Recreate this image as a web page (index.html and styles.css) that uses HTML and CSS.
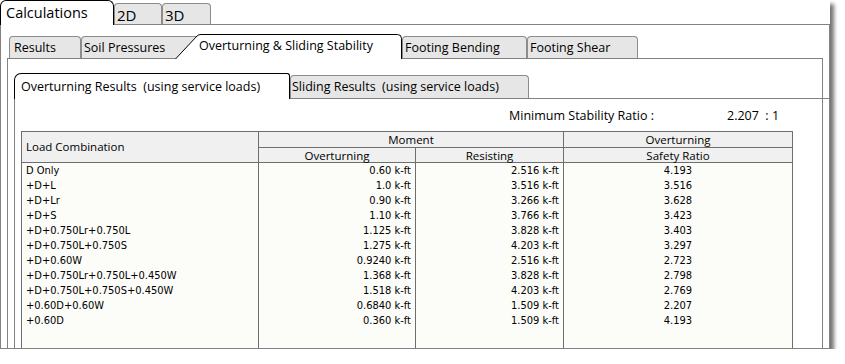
FILE: index.html
```html
<!DOCTYPE html>
<html>
<head>
<meta charset="utf-8">
<link rel="stylesheet" href="styles.css">
</head>
<body>
<div class="window">
  <div class="tabs top-tabs">
    <div class="tab top active calc">Calculations</div>
    <div class="tab top t2d">2D</div>
    <div class="tab top t3d">3D</div>
  </div>
  <div class="pane outer">
    <div class="tabs mid-tabs">
      <div class="tab mid results">Results</div>
      <div class="tab mid soil">Soil Pressures</div>
      <div class="tab mid slant"><svg class="slant-shape" width="227" height="25" viewBox="0 0 227 25"><path d="M0.5 25 L22 2 Q23.5 0.5 26 0.5 L222.5 0.5 Q226.5 0.5 226.5 4.5 L226.5 25" fill="#fff" stroke="#000" stroke-width="1"/></svg><span class="slant-label">Overturning &amp; Sliding Stability</span></div>
      <div class="tab mid bending">Footing Bending</div>
      <div class="tab mid shear">Footing Shear</div>
    </div>
    <div class="pane middle">
      <div class="tabs sub-tabs">
        <div class="tab sub active overt">Overturning Results&nbsp; (using service loads)</div>
        <div class="tab sub sliding">Sliding Results&nbsp; (using service loads)</div>
      </div>
      <div class="pane inner">
        <div class="ratio">
          <span class="ratio-label">Minimum Stability Ratio :</span>
          <span class="ratio-value">2.207&nbsp; : 1</span>
        </div>
        <table class="grid">
          <colgroup>
            <col class="c1"><col class="c2"><col class="c3"><col class="c4">
          </colgroup>
          <thead>
            <tr class="h1">
              <th rowspan="2" class="lc">Load Combination</th>
              <th colspan="2">Moment</th>
              <th>Overturning</th>
            </tr>
            <tr class="h2">
              <th>Overturning</th>
              <th>Resisting</th>
              <th>Safety Ratio</th>
            </tr>
          </thead>
          <tbody>
            <tr><td>D Only</td><td class="r">0.60 k-ft</td><td class="r">2.516 k-ft</td><td class="c">4.193</td></tr>
            <tr><td>+D+L</td><td class="r">1.0 k-ft</td><td class="r">3.516 k-ft</td><td class="c">3.516</td></tr>
            <tr><td>+D+Lr</td><td class="r">0.90 k-ft</td><td class="r">3.266 k-ft</td><td class="c">3.628</td></tr>
            <tr><td>+D+S</td><td class="r">1.10 k-ft</td><td class="r">3.766 k-ft</td><td class="c">3.423</td></tr>
            <tr><td>+D+0.750Lr+0.750L</td><td class="r">1.125 k-ft</td><td class="r">3.828 k-ft</td><td class="c">3.403</td></tr>
            <tr><td>+D+0.750L+0.750S</td><td class="r">1.275 k-ft</td><td class="r">4.203 k-ft</td><td class="c">3.297</td></tr>
            <tr><td>+D+0.60W</td><td class="r">0.9240 k-ft</td><td class="r">2.516 k-ft</td><td class="c">2.723</td></tr>
            <tr><td>+D+0.750Lr+0.750L+0.450W</td><td class="r">1.368 k-ft</td><td class="r">3.828 k-ft</td><td class="c">2.798</td></tr>
            <tr><td>+D+0.750L+0.750S+0.450W</td><td class="r">1.518 k-ft</td><td class="r">4.203 k-ft</td><td class="c">2.769</td></tr>
            <tr><td>+0.60D+0.60W</td><td class="r">0.6840 k-ft</td><td class="r">1.509 k-ft</td><td class="c">2.207</td></tr>
            <tr><td>+0.60D</td><td class="r">0.360 k-ft</td><td class="r">1.509 k-ft</td><td class="c">4.193</td></tr>
            <tr class="filler"><td></td><td></td><td></td><td></td></tr>
          </tbody>
        </table>
      </div>
    </div>
  </div>
</div>
</body>
</html>
```
FILE: styles.css
```css
* { box-sizing: border-box; }

body {
  margin: 0;
  background: #fff;
  font-family: "Open Sans", "Noto Sans", sans-serif;
  color: #000;
}

.window {
  width: 830px;
  height: 349px;
  display: flex;
  flex-direction: column;
  background: #fff;
  box-shadow: 4px 4px 4px rgba(0, 0, 0, 0.55);
}

.tabs {
  display: flex;
  align-items: flex-end;
  position: relative;
  z-index: 2;
  flex: none;
}

.tab {
  flex: none;
  white-space: nowrap;
  background: #e6e6e6;
  border: 1px solid #8c8c8c;
  border-bottom: none;
  border-radius: 4px 4px 0 0;
}

/* top level */
.top-tabs { height: 24px; }
.tab.top {
  height: 21px;
  font-size: 15px;
  line-height: 22px;
  padding-left: 2px;
}
.tab.top.active {
  height: 25px;
  margin-bottom: -1px;
  background: #fff;
  border-color: #000;
  border-radius: 6px 6px 0 0;
  font-size: 14.5px;
  line-height: 24px;
  padding-left: 5px;
}
.calc { width: 114px; }
.t2d { width: 48px; }
.t3d { width: 49px; }

.pane.outer {
  flex: 1;
  min-height: 0;
  border: 1px solid #828282;
  padding: 0 6px;
  overflow: hidden;
  display: flex;
  flex-direction: column;
}

/* second level */
.mid-tabs {
  height: 24px;
  margin-top: 9px;
}
.tab.mid {
  height: 22px;
  font-size: 12.5px;
  line-height: 22px;
}
.results { width: 72px; margin-left: 2px; padding-left: 4px; }
.soil { width: 120px; padding-left: 2px; }
.tab.slant {
  position: relative;
  width: 227px;
  height: 25px;
  margin-left: -26px;
  margin-bottom: -1px;
  background: transparent;
  border: none;
  line-height: 24px;
  padding-left: 24px;
}
.slant-shape {
  position: absolute;
  left: 0;
  top: 0;
}
.slant-label { position: relative; }
.bending { width: 125px; padding-left: 2px; }
.shear { width: 111px; padding-left: 2px; }

.pane.middle {
  flex: 1;
  border: 1px solid #828282;
  border-bottom: none;
  padding: 0 6px;
  display: flex;
  flex-direction: column;
}

/* third level */
.sub-tabs {
  height: 25px;
  margin-top: 14px;
}
.tab.sub {
  height: 23px;
  font-size: 12.5px;
  line-height: 22px;
  padding-left: 1px;
}
.tab.sub.active {
  height: 26px;
  margin-bottom: -1px;
  background: #fff;
  border-color: #000;
  border-radius: 7px 3px 0 0;
  line-height: 25px;
  padding-left: 6px;
}
.overt { width: 276px; }
.sliding { width: 239px; }

.pane.inner {
  flex: 1;
  margin-right: -24px;
  border-top: 1px solid #828282;
  border-left: 1px solid #828282;
  padding: 0 6px;
}

.ratio {
  display: flex;
  height: 16px;
  margin-top: 9px;
  padding-left: 488px;
  font-size: 12.5px;
  line-height: 16px;
  white-space: nowrap;
}
.ratio-label { width: 218px; }

.grid {
  margin-top: 7px;
  border-collapse: collapse;
  table-layout: fixed;
  width: 771px;
  background: #fcfcf9;
  border: 1px solid #6e6e6e;
}
.c1 { width: 237px; }
.c2 { width: 157px; }
.c3 { width: 148px; }
.c4 { width: 229px; }

.grid th {
  background: #f0f0f0;
  border: 1px solid #6e6e6e;
  font-weight: normal;
  font-size: 11.5px;
  padding: 0;
  text-align: center;
  white-space: nowrap;
}
.h1 th { height: 16px; line-height: 14px; }
.h2 th { height: 15px; line-height: 13px; }
.grid th.lc { text-align: left; padding-left: 4px; }

.grid td {
  font-family: "DejaVu Sans Condensed", "DejaVu Sans", sans-serif;
  font-size: 11px;
  height: 15px;
  line-height: 15px;
  padding: 0 4px;
  border-left: 1px solid #6e6e6e;
  border-right: 1px solid #6e6e6e;
  white-space: nowrap;
}
.grid td.r { text-align: right; }
.grid td.c { text-align: center; }
.grid tr.filler td { height: 60px; }
```
